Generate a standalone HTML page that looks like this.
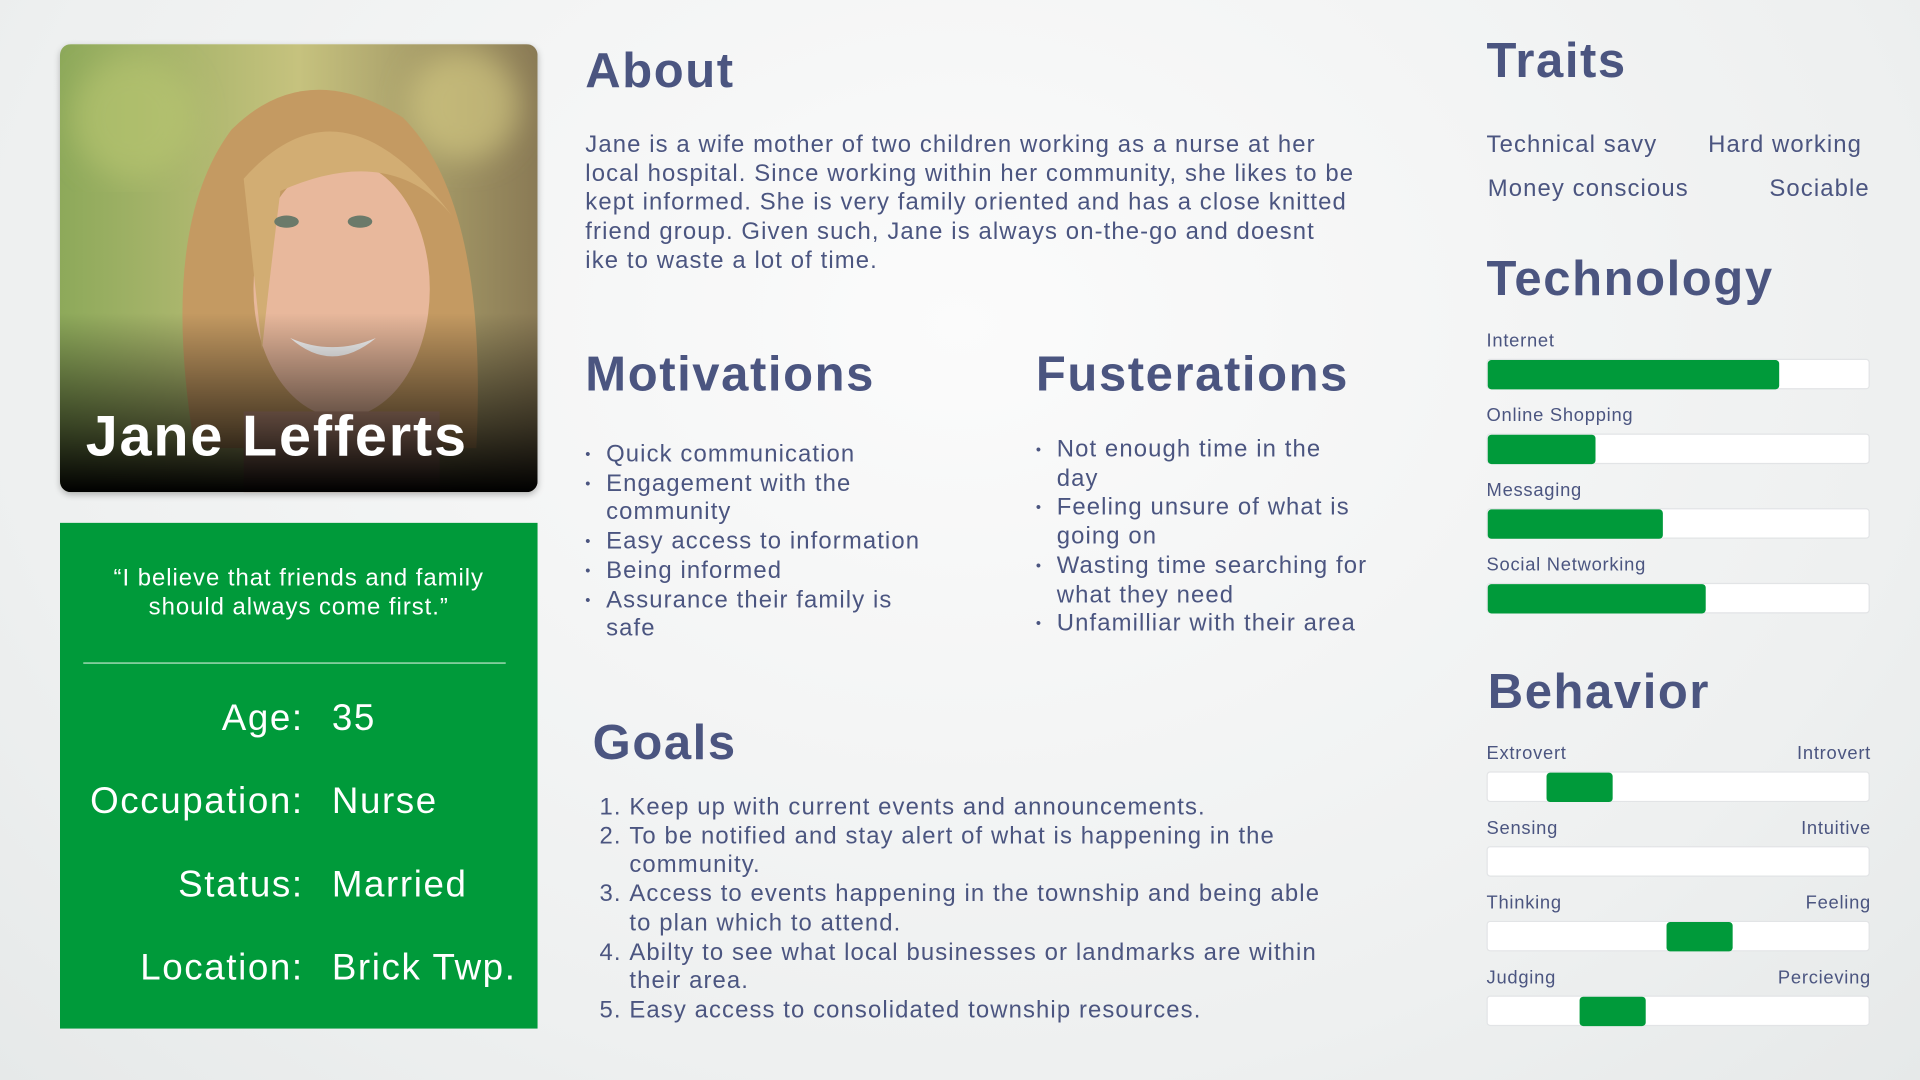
<!DOCTYPE html>
<html><head><meta charset="utf-8"><style>
html,body{margin:0;padding:0;width:1920px;height:1080px;overflow:hidden;background:#eef0f0}
#w{position:absolute;left:0;top:0;width:1568px;height:882px;transform:scale(1.22449);transform-origin:0 0;
background:radial-gradient(ellipse at 50% 30%,#fbfbfb 0%,#eef0f0 70%,#e6e9e9 100%);font-family:"Liberation Sans",sans-serif;color:#4b5580}
.a{position:absolute}
h2{position:absolute;margin:0;font-weight:bold;font-size:40px;color:#4b5580;letter-spacing:1.3px}
.t{font-size:19.5px;line-height:23.7px;letter-spacing:0.9px}
ul{margin:0;padding:0;list-style:none}
li{position:relative;padding-left:17px}
li:before{content:"•";position:absolute;left:0;font-size:12px}
ol{margin:0;padding-left:36px;white-space:nowrap}
ol li{padding:0}
ol li:before{content:none}
.bar{position:absolute;left:1214px;width:313px;height:25px;background:#fff;border:1px solid #e2e4e6;border-radius:3px;box-sizing:border-box}
.bar i{position:absolute;top:0;height:24px;background:#009a3a;border-radius:3px}
.lb{position:absolute;font-size:15px;letter-spacing:0.6px}
</style></head><body><div id="w">
<div class="a" style="left:49px;top:36px;width:390px;height:366px;border-radius:9px;overflow:hidden;box-shadow:0 2px 5px rgba(0,0,0,.25)">
<svg width="390" height="366" viewBox="0 0 390 366">
<defs>
<linearGradient id="bg" x1="0" y1="0" x2="1" y2="0"><stop offset="0" stop-color="#8da95a"/><stop offset=".5" stop-color="#c6c27e"/><stop offset="1" stop-color="#8a7a55"/></linearGradient>
<linearGradient id="dk" x1="0" y1="0" x2="0" y2="1"><stop offset=".6" stop-color="#000" stop-opacity="0"/><stop offset=".85" stop-color="#000" stop-opacity=".6"/><stop offset="1" stop-color="#000"/></linearGradient>
<filter id="bl"><feGaussianBlur stdDeviation="12"/></filter>
</defs>
<rect width="390" height="366" fill="url(#bg)"/>
<g filter="url(#bl)"><circle cx="60" cy="60" r="50" fill="#b9c670" opacity=".6"/><circle cx="330" cy="50" r="45" fill="#d8cf86" opacity=".6"/></g>
<path d="M110 330 Q80 150 140 70 Q200 10 280 60 Q350 130 340 330 Z" fill="#c49a62"/>
<ellipse cx="230" cy="200" rx="72" ry="105" fill="#e8b89c"/>
<path d="M150 110 Q230 20 320 140 Q270 80 180 120 Q170 200 165 250 Z" fill="#d2ad73"/>
<ellipse cx="185" cy="145" rx="10" ry="5" fill="#6b7a6a"/><ellipse cx="245" cy="145" rx="10" ry="5" fill="#6b7a6a"/>
<rect x="150" y="300" width="160" height="70" fill="#c89880"/>
<path d="M188 240 Q222 270 258 240 Q222 255 188 240Z" fill="#fff"/>
<rect width="390" height="366" fill="url(#dk)"/>
<text x="21" y="336" fill="#fff" font-family="Liberation Sans" font-weight="bold" font-size="47" letter-spacing="1.5">Jane Lefferts</text>
</svg></div>
<div class="a" style="left:49px;top:427px;width:390px;height:413px;background:#009a3a;color:#fff">
<div class="a" style="left:0;width:390px;top:33px;text-align:center;font-size:19.5px;line-height:24px;letter-spacing:0.8px">“I believe that friends and family<br>should always come first.”</div>
<div class="a" style="left:19px;top:114px;width:345px;height:1px;background:#bfe6cc"></div>
<div class="a" style="right:191px;top:126px;font-size:30px;text-align:right;line-height:68px;white-space:nowrap;letter-spacing:1.3px">Age:<br>Occupation:<br>Status:<br>Location:</div>
<div class="a" style="left:222px;top:126px;font-size:30px;line-height:68px;white-space:nowrap;letter-spacing:1.3px">35<br>Nurse<br>Married<br>Brick Twp.</div>
</div>
<h2 style="left:478px;top:36px">About</h2>
<div class="a t" style="left:478px;top:107px;width:628px">Jane is a wife mother of two children working as a nurse at her local hospital. Since working within her community, she likes to be kept informed. She is very family oriented and has a close knitted friend group. Given such, Jane is always on-the-go and doesnt ike to waste a lot of time.</div>
<h2 style="left:478px;top:284px">Motivations</h2>
<ul class="a t" style="left:478px;top:360px;width:280px"><li>Quick communication</li><li>Engagement with the community</li><li>Easy access to information</li><li>Being informed</li><li>Assurance their family is safe</li></ul>
<h2 style="left:846px;top:284px">Fusterations</h2>
<ul class="a t" style="left:846px;top:356px;width:290px;white-space:nowrap"><li>Not enough time in the<br>day</li><li>Feeling unsure of what is<br>going on</li><li>Wasting time searching for<br>what they need</li><li>Unfamilliar with their area</li></ul>
<h2 style="left:484px;top:585px">Goals</h2>
<ol class="a t" style="left:478px;top:648px;width:660px"><li>Keep up with current events and announcements.</li><li>To be notified and stay alert of what is happening in the<br>community.</li><li>Access to events happening in the township and being able<br>to plan which to attend.</li><li>Abilty to see what local businesses or landmarks are within<br>their area.</li><li>Easy access to consolidated township resources.</li></ol>
<h2 style="left:1214px;top:28px">Traits</h2>
<div class="a t" style="left:1214px;top:107px">Technical savy</div><div class="a t" style="left:1395px;top:107px">Hard working</div>
<div class="a t" style="left:1215px;top:143px">Money conscious</div><div class="a t" style="left:1445px;top:143px">Sociable</div>
<h2 style="left:1214px;top:206px">Technology</h2>
<div class="lb" style="left:1214px;top:270px">Internet</div><div class="bar" style="top:293px"><i style="left:0;width:238px"></i></div>
<div class="lb" style="left:1214px;top:331px">Online Shopping</div><div class="bar" style="top:354px"><i style="left:0;width:88px"></i></div>
<div class="lb" style="left:1214px;top:392px">Messaging</div><div class="bar" style="top:415px"><i style="left:0;width:143px"></i></div>
<div class="lb" style="left:1214px;top:453px">Social Networking</div><div class="bar" style="top:476px"><i style="left:0;width:178px"></i></div>
<h2 style="left:1215px;top:543px">Behavior</h2>
<div class="lb" style="left:1214px;top:607px">Extrovert</div><div class="lb" style="right:40px;top:607px">Introvert</div><div class="bar" style="top:630px"><i style="left:48px;width:54px"></i></div>
<div class="lb" style="left:1214px;top:668px">Sensing</div><div class="lb" style="right:40px;top:668px">Intuitive</div><div class="bar" style="top:691px"></div>
<div class="lb" style="left:1214px;top:729px">Thinking</div><div class="lb" style="right:40px;top:729px">Feeling</div><div class="bar" style="top:752px"><i style="left:146px;width:54px"></i></div>
<div class="lb" style="left:1214px;top:790px">Judging</div><div class="lb" style="right:40px;top:790px">Percieving</div><div class="bar" style="top:813px"><i style="left:75px;width:54px"></i></div>
</div></body></html>
